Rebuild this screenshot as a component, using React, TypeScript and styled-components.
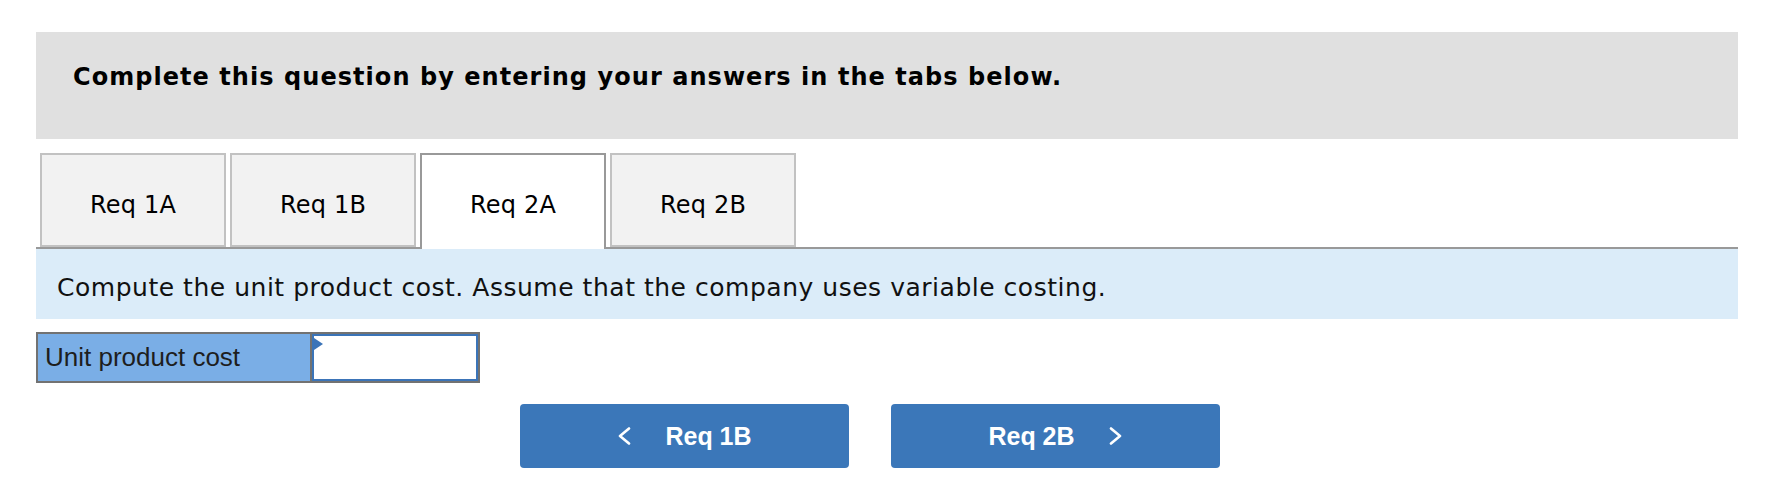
import styled, { createGlobalStyle } from 'styled-components';

const GlobalStyle = createGlobalStyle`
  body {
    margin: 0;
    background: #ffffff;
  }
`;

const Page = styled.div`
  width: 1702px;
  padding: 32px 0 0 36px;
  font-family: 'DejaVu Sans', Verdana, sans-serif;
  color: #000;
`;

const Header = styled.div`
  height: 107px;
  box-sizing: border-box;
  padding: 30px 0 0 37px;
  background: #e0e0e0;
  font-size: 24px;
  font-weight: bold;
  letter-spacing: 1.05px;
  line-height: 30px;
`;

const TabBar = styled.div`
  display: flex;
  gap: 4px;
  margin-top: 14px;
  padding-left: 4px;
  border-bottom: 2px solid #999999;
`;

const Tab = styled.div<{ $active?: boolean }>`
  width: 186px;
  height: ${(p) => (p.$active ? '96px' : '94px')};
  box-sizing: border-box;
  margin-bottom: ${(p) => (p.$active ? '-2px' : '0')};
  padding-top: 9px;
  padding-bottom: ${(p) => (p.$active ? '4px' : '0')};
  display: flex;
  align-items: center;
  justify-content: center;
  border: 2px solid ${(p) => (p.$active ? '#999999' : '#c2c2c2')};
  border-bottom: ${(p) => (p.$active ? 'none' : '2px solid #c2c2c2')};
  background: ${(p) => (p.$active ? '#ffffff' : '#f2f2f2')};
  font-size: 24px;
  letter-spacing: 0.2px;
  position: relative;
  z-index: ${(p) => (p.$active ? 1 : 0)};
`;

const Instruction = styled.div`
  height: 70px;
  box-sizing: border-box;
  padding: 7px 0 0 21px;
  display: flex;
  align-items: center;
  background: #dbecf9;
  font-size: 25px;
  letter-spacing: 0.52px;
  color: #111;
`;

const AnswerTable = styled.div`
  display: flex;
  width: 444px;
  height: 51px;
  box-sizing: border-box;
  margin-top: 13px;
  border: 2px solid #727272;
`;

const LabelCell = styled.div`
  width: 274px;
  box-sizing: border-box;
  padding-left: 7px;
  display: flex;
  align-items: center;
  background: #7aaee6;
  border-right: 2px solid #727272;
  font-family: 'Liberation Sans', Arial, sans-serif;
  font-size: 26px;
  color: #1e1e1e;
`;

const InputCell = styled.div`
  flex: 1;
  position: relative;
  border: 2px solid #3b74b8;
  background: #ffffff;
`;

const Marker = styled.span`
  position: absolute;
  left: 0;
  top: 2px;
  width: 0;
  height: 0;
  border-top: 6px solid transparent;
  border-bottom: 6px solid transparent;
  border-left: 9px solid #3b74b8;
`;

const ValueInput = styled.input`
  width: 100%;
  height: 100%;
  box-sizing: border-box;
  border: none;
  outline: none;
  background: transparent;
  padding: 0 8px;
  font-family: 'Liberation Sans', Arial, sans-serif;
  font-size: 24px;
  text-align: right;
`;

const ButtonRow = styled.div`
  display: flex;
  justify-content: center;
  gap: 42px;
  margin-top: 21px;
  padding-right: 34px;
`;

const NavButton = styled.button`
  width: 329px;
  height: 64px;
  display: flex;
  align-items: center;
  justify-content: center;
  gap: 34px;
  border: none;
  border-radius: 4px;
  background: #3b77b9;
  color: #ffffff;
  font-family: 'Liberation Sans', Arial, sans-serif;
  font-size: 25px;
  font-weight: bold;
  padding: 0;
  cursor: pointer;
`;

const Chevron = ({ dir }: { dir: 'left' | 'right' }) => (
  <svg width="14" height="18" viewBox="0 0 14 18" fill="none">
    <path
      d={dir === 'left' ? 'M12 1.5 L3 9 L12 16.5' : 'M2 1.5 L11 9 L2 16.5'}
      stroke="#ffffff"
      strokeWidth="2.6"
      strokeLinecap="round"
      strokeLinejoin="round"
    />
  </svg>
);

const tabs = ['Req 1A', 'Req 1B', 'Req 2A', 'Req 2B'];

export default function App() {
  return (
    <>
      <GlobalStyle />
      <Page>
        <Header>Complete this question by entering your answers in the tabs below.</Header>
        <TabBar>
          {tabs.map((t) => (
            <Tab key={t} $active={t === 'Req 2A'}>
              {t}
            </Tab>
          ))}
        </TabBar>
        <Instruction>
          Compute the unit product cost. Assume that the company uses variable costing.
        </Instruction>
        <AnswerTable>
          <LabelCell>Unit product cost</LabelCell>
          <InputCell>
            <Marker />
            <ValueInput type="text" />
          </InputCell>
        </AnswerTable>
        <ButtonRow>
          <NavButton>
            <Chevron dir="left" />
            Req 1B
          </NavButton>
          <NavButton>
            Req 2B
            <Chevron dir="right" />
          </NavButton>
        </ButtonRow>
      </Page>
    </>
  );
}
